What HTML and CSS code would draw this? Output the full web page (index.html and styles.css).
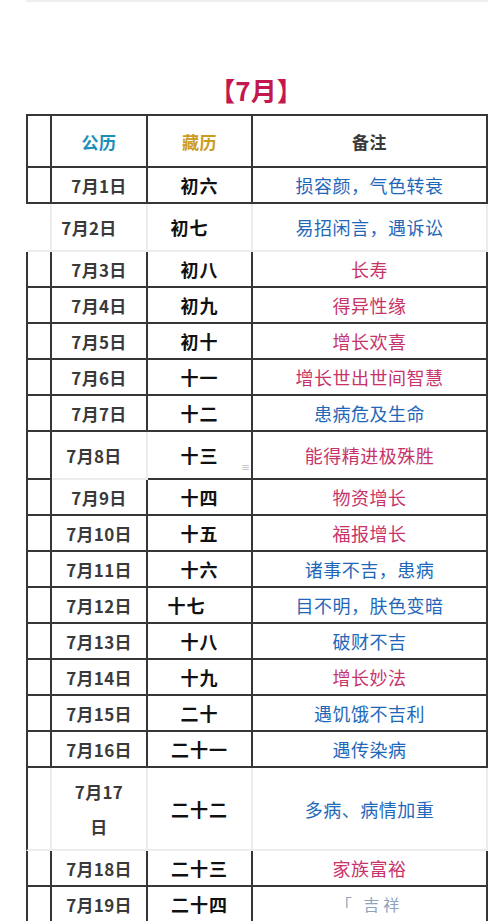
FILE: index.html
```html
<!DOCTYPE html>
<html lang="zh-CN">
<head>
<meta charset="utf-8">
<title>7月</title>
<link rel="stylesheet" href="styles.css">
</head>
<body>
<div class="topline"></div>
<h1 class="title">【7月】</h1>
<div class="table">
  <div class="row head"><div class="cell c0"></div><div class="cell c1 gl">公历</div><div class="cell c2 zl">藏历</div><div class="cell c3 bz">备注</div></div>
  <div class="row"><div class="cell c0"></div><div class="cell c1">7月1日</div><div class="cell c2">初六</div><div class="cell c3 blue">损容颜，气色转衰</div></div>
  <div class="row tall r2"><div class="cell c0"></div><div class="cell c1">7月2日</div><div class="cell c2">初七</div><div class="cell c3 blue">易招闲言，遇诉讼</div></div>
  <div class="row"><div class="cell c0"></div><div class="cell c1">7月3日</div><div class="cell c2">初八</div><div class="cell c3 pink">长寿</div></div>
  <div class="row"><div class="cell c0"></div><div class="cell c1">7月4日</div><div class="cell c2">初九</div><div class="cell c3 pink">得异性缘</div></div>
  <div class="row"><div class="cell c0"></div><div class="cell c1">7月5日</div><div class="cell c2">初十</div><div class="cell c3 pink">增长欢喜</div></div>
  <div class="row"><div class="cell c0"></div><div class="cell c1">7月6日</div><div class="cell c2">十一</div><div class="cell c3 pink">增长世出世间智慧</div></div>
  <div class="row"><div class="cell c0"></div><div class="cell c1">7月7日</div><div class="cell c2">十二</div><div class="cell c3 blue">患病危及生命</div></div>
  <div class="row tall r8"><div class="cell c0"></div><div class="cell c1">7月8日</div><div class="cell c2">十三<span class="mark">≡</span></div><div class="cell c3 pink">能得精进极殊胜</div></div>
  <div class="row"><div class="cell c0"></div><div class="cell c1">7月9日</div><div class="cell c2">十四</div><div class="cell c3 pink">物资增长</div></div>
  <div class="row"><div class="cell c0"></div><div class="cell c1">7月10日</div><div class="cell c2">十五</div><div class="cell c3 pink">福报增长</div></div>
  <div class="row"><div class="cell c0"></div><div class="cell c1">7月11日</div><div class="cell c2">十六</div><div class="cell c3 blue">诸事不吉，患病</div></div>
  <div class="row r12"><div class="cell c0"></div><div class="cell c1">7月12日</div><div class="cell c2">十七</div><div class="cell c3 blue">目不明，肤色变暗</div></div>
  <div class="row"><div class="cell c0"></div><div class="cell c1">7月13日</div><div class="cell c2">十八</div><div class="cell c3 blue">破财不吉</div></div>
  <div class="row"><div class="cell c0"></div><div class="cell c1">7月14日</div><div class="cell c2">十九</div><div class="cell c3 pink">增长妙法</div></div>
  <div class="row"><div class="cell c0"></div><div class="cell c1">7月15日</div><div class="cell c2">二十</div><div class="cell c3 blue">遇饥饿不吉利</div></div>
  <div class="row"><div class="cell c0"></div><div class="cell c1">7月16日</div><div class="cell c2">二十一</div><div class="cell c3 blue">遇传染病</div></div>
  <div class="row r17"><div class="cell c0"></div><div class="cell c1">7月17日</div><div class="cell c2">二十二</div><div class="cell c3 blue">多病、病情加重</div></div>
  <div class="row"><div class="cell c0"></div><div class="cell c1">7月18日</div><div class="cell c2">二十三</div><div class="cell c3 pink">家族富裕</div></div>
  <div class="row"><div class="cell c0"></div><div class="cell c1">7月19日</div><div class="cell c2">二十四</div><div class="cell c3 faded">「 吉祥</div></div>
</div>
</body>
</html>
```

FILE: styles.css
```css
* { box-sizing: border-box; }

body {
  margin: 0;
  background: #ffffff;
  font-family: "Noto Sans CJK SC", "Noto Sans", sans-serif;
  color: #333;
  overflow: hidden;
}

.topline {
  height: 2px;
  margin: 0 12px 0 26px;
  background: #eeeeee;
}

.title {
  margin: 70px 0 0 0;
  height: 42px;
  line-height: 36px;
  text-align: center;
  padding-left: 12px;
  font-size: 26px;
  font-weight: 700;
  color: #c2174f;
}

.table {
  margin-left: 26px;
  width: 462px;
}

.row {
  display: grid;
  grid-template-columns: 26px 96px 105px 235px;
  height: 36px;
}

.row.head { height: 54px; }
.row.tall { height: 48px; }
.row.r17 { height: 83px; }

.cell {
  display: flex;
  align-items: center;
  justify-content: center;
  text-align: center;
  border-right: 2px solid #363636;
  border-bottom: 2px solid #363636;
  white-space: normal;
}

.head .cell { border-top: 2px solid #363636; }

.c0 { border-left: 2px solid #363636; }

.c1 {
  font-size: 17px;
  font-weight: 700;
  color: #3a3a3a;
  letter-spacing: 0.3px;
}

.c2 {
  font-size: 18px;
  font-weight: 700;
  color: #111;
  letter-spacing: 1px;
  position: relative;
}

.c3 {
  font-size: 18px;
  letter-spacing: 0.5px;
}

.head .cell {
  font-size: 17px;
  font-weight: 700;
  letter-spacing: 0.5px;
}
.gl { color: #1c8db8; }
.zl { color: #c99c22; }
.bz { color: #3a3a3a; }

.blue { color: #1f68b9; }
.pink { color: #c8336a; }
.faded { color: #8ea3bd; font-size: 16px; letter-spacing: 4px; }

/* 7月2日 row: faint inner lines, shifted text */
.r2 .cell { border-right-color: #ececec; border-bottom-color: #ececec; }
.r2 .c0 { border-left-color: #ffffff; }
.r2 .c1 { padding-right: 20px; }
.r2 .c2 { padding-right: 20px; }

/* 7月8日 row */
.r8 .c1 { border-right-color: #ececec; border-bottom-color: #ececec; padding-right: 10px; }
.r8 .c2 { border-right-color: #363636; }
.mark {
  position: absolute;
  right: 1px;
  top: 29px;
  font-size: 9px;
  font-weight: 400;
  color: #9a9a9a;
  letter-spacing: 0;
}

/* 7月12日 row */
.r12 .c2 { padding-right: 26px; }

/* 7月17日 row */
.r17 .cell { border-right-color: #ececec; border-bottom-color: #ececec; }
.r17 .c1 {
  padding: 0 18px;
  line-height: 35px;
}
```
